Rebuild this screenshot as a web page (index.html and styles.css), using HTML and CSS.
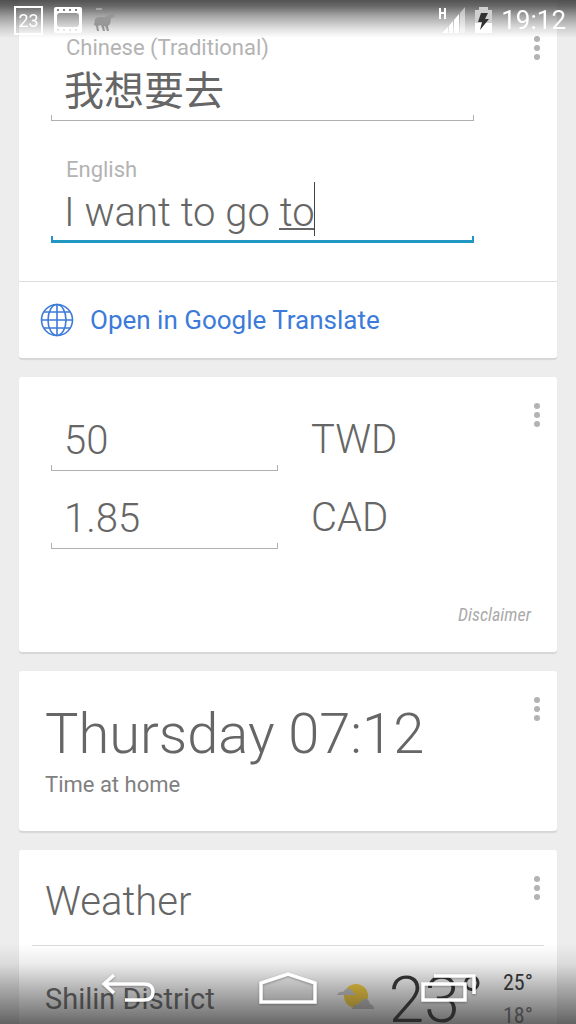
FILE: index.html
```html
<!DOCTYPE html>
<html lang="en">
<head>
    <meta charset="UTF-8">
    <meta name="viewport" content="width=device-width, initial-scale=1.0">
    <title>Cards</title>
    <link rel="stylesheet" href="styles.css">
</head>
<body>
    <header class="status-bar">
        <div class="status-left">
            <span class="date-badge">23</span>
            <svg class="film" width="28" height="26" viewBox="0 0 28 26">
                <path fill="#fff" fill-rule="evenodd" d="M2 0H26Q28 0 28 2V24Q28 26 26 26H2Q0 26 0 24V2Q0 0 2 0ZM6 6Q3 6 3 9V17Q3 20 6 20H22Q25 20 25 17V9Q25 6 22 6ZM3 2V4H5V2ZM9 2V4H11V2ZM15 2V4H17V2ZM21 2V4H23V2ZM3 22V24H5V22ZM9 22V24H11V22ZM15 22V24H17V22ZM21 22V24H23V22Z"/>
            </svg>
            <svg width="24" height="26" viewBox="0 0 24 26">
                <path fill="#fff" opacity=".3" d="M3 1H9V3H3Z"/>
                <path fill="#979797" d="M17 5L18 7L22 7L21 10L18 11L17 17L15 19L16 24H14L12 19H11L12 24H10L8 18L5 19L6 24H4L3 19L1 18L2 12L5 10H12L15 8Z"/>
            </svg>
        </div>
        <div class="status-right">
            <svg width="28" height="26" viewBox="0 0 28 26">
                <path fill="none" stroke="#fff" stroke-width="2" d="M2 1V12M7 1V12M2 6H7"/>
                <path fill="#fff" d="M4 26L10 20V26ZM11 19L15 14V26H11ZM16 13L21 7V26H16Z"/>
                <path fill="#fff" opacity=".5" d="M22 6L27 0V26H22Z"/>
            </svg>
            <svg class="battery" width="17" height="26" viewBox="0 0 17 26">
                <path fill="#d0d0d0" d="M4 0H13V3H17V16H0V3H4Z"/>
                <path fill="#fff" d="M0 16H17V26H0Z"/>
                <path fill="#333" d="M6 6H13L10 12H14L5 23L7 15H3Z"/>
            </svg>
            <span class="clock">19:12</span>
        </div>
    </header>

    <main class="cards">
        <section class="card translate">
            <button class="menu" aria-label="Translate options"><i></i><i></i><i></i></button>
            <div class="translate-form">
                <label class="lang" for="source">Chinese (Traditional)</label>
                <div class="field">
                    <input type="text" id="source" class="cjk" value="我想要去">
                </div>
                <label class="lang" for="target">English</label>
                <div class="field active">
                    <input type="text" id="target" value="I want to go to">
                    <span class="composing"></span>
                    <span class="caret"></span>
                </div>
            </div>
            <a class="open-link" href="#">
                <svg width="34" height="34" viewBox="0 0 34 34" fill="none" stroke="#3c7bd9" stroke-width="1.6">
                    <circle cx="17" cy="17" r="15.5"/>
                    <ellipse cx="17" cy="17" rx="9" ry="15.5"/>
                    <path d="M17 1V33M1 17H33M4 9H30M4 25H30"/>
                </svg>
                Open in Google Translate
            </a>
        </section>

        <section class="card currency">
            <button class="menu" aria-label="Currency options"><i></i><i></i><i></i></button>
            <div class="rates">
                <div class="field"><input type="text" id="twd" value="50"></div>
                <label for="twd">TWD</label>
                <div class="field"><input type="text" id="cad" value="1.85"></div>
                <label for="cad">CAD</label>
            </div>
            <a class="disclaimer" href="#">Disclaimer</a>
        </section>

        <section class="card time">
            <button class="menu" aria-label="Time options"><i></i><i></i><i></i></button>
            <h1>Thursday 07:12</h1>
            <p>Time at home</p>
        </section>

        <section class="card weather">
            <button class="menu" aria-label="Weather options"><i></i><i></i><i></i></button>
            <h2>Weather</h2>
            <div class="forecast">
                <span class="place">Shilin District</span>
                <svg width="38" height="26" viewBox="0 0 38 26">
                    <circle cx="19" cy="12" r="12" fill="#ffd43a"/>
                    <path fill="#ccc" d="M0 11Q2 7 6 8Q9 3 13 5Q16 6 16 9Q19 9 19 11Z"/>
                    <path fill="#c4c4c4" d="M15 25Q17 20 22 20Q25 14 30 15Q33 17 33 20Q37 21 37 25Z"/>
                </svg>
                <span class="temp">23°</span>
                <div class="range">
                    <span>25°</span>
                    <span class="low">18°</span>
                </div>
            </div>
        </section>
    </main>

    <nav class="nav-bar">
        <button aria-label="Back">
            <svg width="56" height="32" viewBox="0 0 56 32" fill="none" stroke="#fff" stroke-width="3.5">
                <path d="M14 3L4 12L14 21M4 12H44Q53 12 53 20Q53 28 44 28H25"/>
            </svg>
        </button>
        <button aria-label="Home">
            <svg width="60" height="34" viewBox="0 0 60 34" fill="none" stroke="#fff" stroke-width="3.5">
                <path d="M3 31V12L30 3L57 12V31Z"/>
            </svg>
        </button>
        <button aria-label="Recent apps">
            <svg width="56" height="32" viewBox="0 0 56 32" fill="none" stroke="#fff" stroke-width="3.5">
                <path d="M3 12H45V28H3ZM14 4H54V22"/>
            </svg>
        </button>
    </nav>
</body>
</html>
```

FILE: styles.css
```css
* {
    box-sizing: border-box;
}
body {
    margin: 0;
    height: 100vh;
    overflow: hidden;
    background-color: #ededed;
    color: #666;
    font-family: Roboto, "Noto Sans CJK TC", sans-serif;
}
button {
    border: none;
    background: none;
    padding: 0;
}
a {
    text-decoration: none;
}

/* system bars */
.status-bar {
    position: fixed;
    top: 0;
    left: 0;
    right: 0;
    z-index: 2;
    height: 40px;
    padding: 0 10px 0 14px;
    display: flex;
    justify-content: space-between;
    align-items: center;
    background: linear-gradient(rgba(50, 50, 50, 0.84), rgba(50, 50, 50, 0.74) 15%, rgba(50, 50, 50, 0.44) 40%, rgba(50, 50, 50, 0.16) 70%, rgba(50, 50, 50, 0) 95%);
    color: #fff;
}
.status-left,
.status-right {
    display: flex;
    align-items: center;
    gap: 11px;
}
.status-right {
    gap: 9px;
}
.date-badge {
    width: 29px;
    height: 29px;
    border: 2px solid #fff;
    font-size: 18px;
    line-height: 26px;
    text-align: center;
}
.clock {
    font-size: 26px;
    line-height: 40px;
}
.nav-bar {
    position: fixed;
    left: 0;
    right: 0;
    bottom: 0;
    z-index: 2;
    height: 80px;
    padding: 8px 48px 0;
    display: grid;
    grid-template-columns: repeat(3, 1fr);
    background: linear-gradient(rgba(40, 40, 40, 0), rgba(40, 40, 40, 0.09) 25%, rgba(40, 40, 40, 0.34) 55%, rgba(40, 40, 40, 0.7));
}
.nav-bar button {
    display: flex;
    justify-content: center;
    align-items: center;
}
.nav-bar svg {
    filter: drop-shadow(0 1px 1px rgba(0, 0, 0, 0.3));
}

/* cards */
.cards {
    padding: 0 19px;
    display: flex;
    flex-direction: column;
    gap: 19px;
}
.card {
    position: relative;
    background-color: #fff;
    border-radius: 3px;
    box-shadow: 0 2px 1px #d6d6d6;
}
.menu {
    position: absolute;
    top: 26px;
    right: 17px;
    display: flex;
    flex-direction: column;
    gap: 3px;
}
.menu i {
    width: 6px;
    height: 6px;
    border-radius: 50%;
    background-color: #b3b3b3;
}

/* text fields with a bracket-shaped underline */
.field {
    position: relative;
    height: 59px;
    border-bottom: 1px solid #b0b0b0;
    background: linear-gradient(#b0b0b0, #b0b0b0) left bottom / 1px 5px no-repeat,
        linear-gradient(#b0b0b0, #b0b0b0) right bottom / 1px 5px no-repeat;
}
.field input {
    width: 100%;
    height: 56px;
    padding: 0 13px;
    border: none;
    outline: none;
    background: none;
    color: #666;
    font: 300 40px Roboto, "Noto Sans CJK TC", sans-serif;
}
.field .cjk {
    height: 52px;
    font-weight: 400;
}
.field.active {
    border-bottom: 3px solid #1f97c2;
    background: linear-gradient(#1f97c2, #1f97c2) left bottom / 2px 4px no-repeat,
        linear-gradient(#1f97c2, #1f97c2) right bottom / 2px 4px no-repeat;
}
.composing {
    position: absolute;
    left: 228px;
    top: 44px;
    width: 35px;
    height: 2px;
    background-color: #666;
}
.caret {
    position: absolute;
    left: 263px;
    top: -2px;
    width: 1px;
    height: 54px;
    background-color: #444;
}

.translate-form {
    padding: 34px 83px 38px 32px;
    border-bottom: 1px solid #ddd;
}
.translate .menu {
    top: 36px;
}
.lang {
    display: block;
    padding-left: 15px;
    color: #b3b3b3;
    font-size: 22px;
    line-height: 28px;
}
.field + .lang {
    margin-top: 35px;
}
.open-link {
    height: 76px;
    padding-left: 21px;
    display: flex;
    align-items: center;
    gap: 16px;
    color: #3c7bd9;
    font-size: 26px;
}

.currency {
    padding: 35px 26px 24px 32px;
}
.rates {
    display: grid;
    grid-template-columns: 227px 1fr;
    gap: 19px 33px;
    font-size: 40px;
    font-weight: 300;
    line-height: 56px;
}
.disclaimer {
    display: block;
    margin-top: 52px;
    color: #aaa;
    font: italic 18px "Roboto Condensed", "Liberation Sans Narrow", Roboto, sans-serif;
    line-height: 27px;
    text-align: right;
}

.time {
    padding: 30px 26px 32px;
}
.time h1 {
    margin: 0;
    font-size: 56px;
    font-weight: 300;
    line-height: 66px;
}
.time p {
    margin: 4px 0 0;
    color: #808080;
    font-size: 22px;
    line-height: 28px;
}

.weather {
    padding: 0 13px;
}
.weather h2 {
    margin: 0;
    padding: 8px 13px 0;
    border-bottom: 1px solid #ddd;
    font-size: 40px;
    font-weight: 300;
    line-height: 87px;
}
.forecast {
    height: 120px;
    padding: 20px 13px;
    display: flex;
    align-items: flex-start;
}
.place {
    flex: 1;
    font-size: 29px;
    line-height: 66px;
}
.forecast svg {
    margin: 18px 14px 0 0;
}
.temp {
    color: #333;
    font-size: 64px;
    font-weight: 300;
    line-height: 70px;
}
.range {
    width: 28px;
    margin-left: 19px;
    display: flex;
    flex-direction: column;
    color: #333;
    font: 22px "Roboto Condensed", "Liberation Sans Narrow", Roboto, sans-serif;
    line-height: 33px;
}
.low {
    color: #777;
}
```
